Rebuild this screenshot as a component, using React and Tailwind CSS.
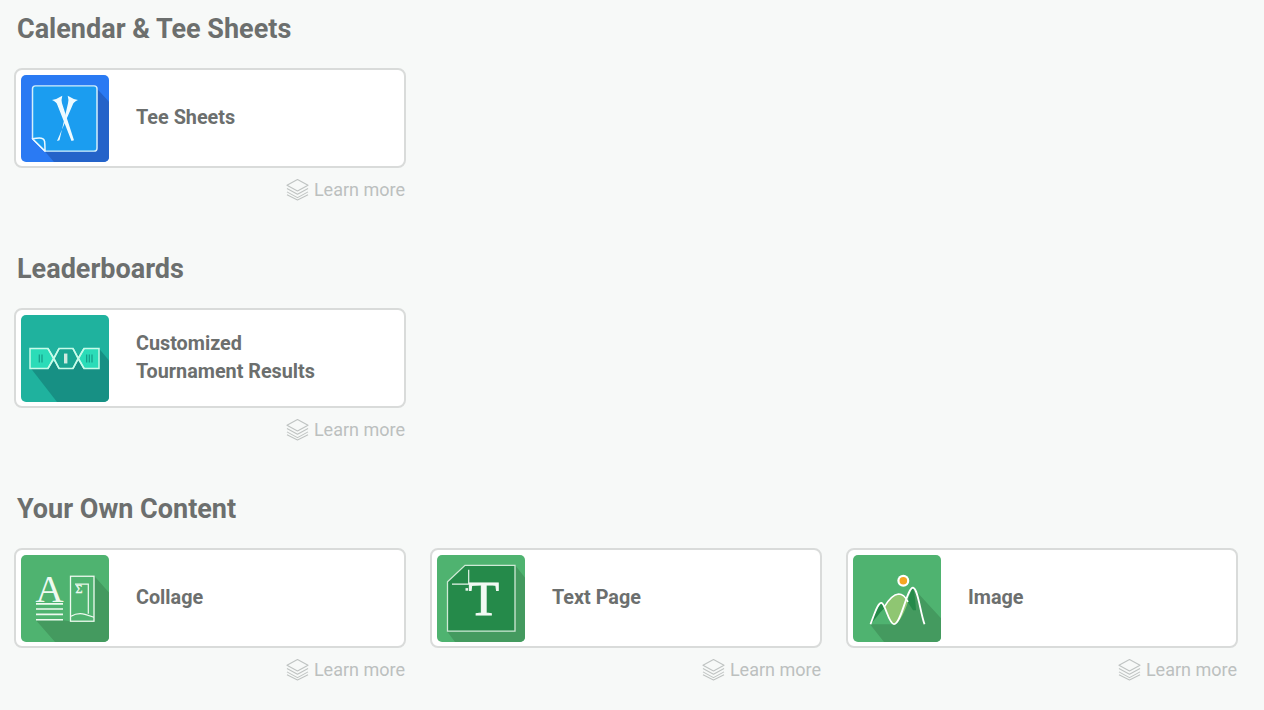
import React from 'react';

const iconClass = 'w-[88px] h-[87px] rounded-[5px] shrink-0';

const TeeIcon = () => (
  <svg viewBox="0 0 88 88" preserveAspectRatio="none" className={iconClass}>
    <rect width="88" height="88" fill="#2a7af3" />
    <polygon points="76,14 88,27 88,88 33,88 22,75" fill="#2463c9" />
    <path d="M11.5 14a3 3 0 0 1 3-3h58.500a3 3 0 0 1 3 3v60a3 3 0 0 1-3 3H24l-12.500-12.500z" fill="#1b9df0" stroke="#d3effb" strokeWidth="1.5" />
    <path d="M11.5 64.500c8-1.500 11.500-1 12 2.500.5 3 .5 6 .5 10z" fill="#1b9df0" stroke="#eaf8ff" strokeWidth="1.500" strokeLinejoin="round" />
    <path d="M31 25.300Q36 24.500 41.300 21 40 25.500 41 28.500L53 66 50.500 66.800 36.500 30.500Q35.500 27 31 25.300z" fill="#eefaff" />
    <path d="M57 25.300Q52 24.500 46.700 21 48 25.500 47 28.500L38.500 66 36 66.800 51.500 30.500Q52.500 27 57 25.300z" fill="#eefaff" />
  </svg>
);

const RibbonIcon = () => (
  <svg viewBox="0 0 88 88" preserveAspectRatio="none" className={iconClass}>
    <rect width="88" height="88" fill="#1fb29e" />
    <polygon points="78,34 88,46 88,88 36,88 10,54" fill="#179084" />
    <polygon points="9,34 27,34 33,44 27,54 9,54" fill="#2bdcb8" stroke="#c7fbe9" strokeWidth="1.500" />
    <polygon points="33,44 38,34 52,34 57,44 52,54 38,54" fill="#19a692" stroke="#c7fbe9" strokeWidth="1.500" />
    <polygon points="57,44 63,34 78,34 78,54 63,54" fill="#2bdcb8" stroke="#c7fbe9" strokeWidth="1.500" />
    <path d="M27 34L38 54M38 34L27 54M52 34L63 54M63 34L52 54" stroke="#c7fbe9" strokeWidth="1.500" />
    <rect x="43" y="39" width="3.400" height="10" fill="#cfe9df" />
    <path d="M18.300 40v8M21 40v8" stroke="#169a87" strokeWidth="1.200" />
    <path d="M65.700 40v8M68.300 40v8M71 40v8" stroke="#169a87" strokeWidth="1.200" />
  </svg>
);

const CollageIcon = () => (
  <svg viewBox="0 0 88 88" preserveAspectRatio="none" className={iconClass}>
    <rect width="88" height="88" fill="#4fb370" />
    <polygon points="73,21 88,38 88,88 34,88 15,66 42,66 49,67 73,67" fill="#449a5f" />
    <text x="28.700" y="47.500" textAnchor="middle" fontFamily="'Liberation Serif', serif" fontSize="39" fill="#eefaf0">A</text>
    <path d="M15 49.500h27M15 54.600h27M15 60h27M15 65.500h27" stroke="#eefaf0" strokeWidth="1.700" />
    <rect x="49.500" y="21.500" width="23.500" height="45.500" fill="none" stroke="#eefaf0" strokeWidth="1.300" />
    <path d="M54 29.500h13.300v30" fill="none" stroke="#eefaf0" strokeWidth="1.200" />
    <path d="M50 62c5-3 10-3 14-2 3 1 6 2 9 3" fill="none" stroke="#eefaf0" strokeWidth="1.200" />
    <text x="58" y="38.500" textAnchor="middle" fontFamily="'Liberation Serif', serif" fontSize="12" fill="#eefaf0" stroke="#eefaf0" strokeWidth="0.300">Σ</text>
  </svg>
);

const TextIcon = () => (
  <svg viewBox="0 0 88 88" preserveAspectRatio="none" className={iconClass}>
    <rect width="88" height="88" fill="#4fb370" />
    <polygon points="78,10 88,23 88,88 18,88 10,77 78,77" fill="#449a5f" />
    <polygon points="28,10.500 78,10.500 78,77 10.500,77 10.500,27" fill="#258a4a" stroke="#cfe9d6" strokeWidth="1.300" />
    <path d="M15 29.500h17M31.700 15v14.500" stroke="#e8f5ec" strokeWidth="1.200" fill="none" />
    <rect x="28.500" y="33.500" width="2.600" height="2.600" fill="#e8f5ec" />
    <text x="46.700" y="61" textAnchor="middle" fontFamily="'Liberation Serif', serif" fontSize="50" fill="#f2faf4" stroke="#f2faf4" strokeWidth="1">T</text>
  </svg>
);

const ImageIcon = () => (
  <svg viewBox="0 0 88 88" preserveAspectRatio="none" className={iconClass}>
    <rect width="88" height="88" fill="#4fb370" />
    <polygon points="60,33 88,64 88,88 31,88 17,70 41,70" fill="#449a5f" />
    <path d="M31 53c4-7 9-13 14.700-13.500 4.300 0 7.300 4 9.300 8-3 9-8 21-13 22-5 1-7-10-11-16.500z" fill="#8fc672" />
    <path d="M17.500 70c4-10 8-20 11-21 1 1 2 3 2.500 5-5 5-9 11-13.500 16z" fill="#258a4a" />
    <path d="M60 33c-2 2-3.500 8-5 15l5 8 3 0c-.5-8-1-16-3-23z" fill="#258a4a" />
    <path d="M17.500 70C22 58 25 48 28.500 48.500c4 1 7 21 12.500 21.500 7 .5 13-37 19-37 5 1 7 24 11.500 37" fill="none" stroke="#ffffff" strokeWidth="1.800" />
    <path d="M31 53c4-7 9-13 14.700-13.500 4.300 0 7.300 4 9.300 8" fill="none" stroke="#ffffff" strokeWidth="1.600" />
    <circle cx="50.300" cy="26" r="6" fill="#ffffff" />
    <circle cx="50.300" cy="26" r="3.800" fill="#f5a623" />
  </svg>
);

const LayersIcon = () => (
  <svg viewBox="0 0 24 24" className="w-[23px] h-[23px] shrink-0" fill="none" stroke="#bfc3c2" strokeWidth="1.100" strokeLinejoin="round">
    <polygon points="12,1.500 23,7.500 12,13.500 1,7.500" />
    <path d="M1 11l11 6 11-6" />
    <path d="M1 14.500l11 6 11-6" />
    <path d="M1 17.500l11 5.500 11-5.500" />
  </svg>
);

const Card = ({ icon, lines }) => (
  <div className="w-[392px]">
    <div className="h-[100px] bg-white border-2 border-[#d9dbda] rounded-lg flex items-center pl-[5px]">
      {icon}
      <div className="ml-[27px] pb-px text-[19.8px] leading-7 font-bold text-[#6c6f6e]">
        {lines.map((line) => (
          <div key={line}>{line}</div>
        ))}
      </div>
    </div>
    <div className="mt-[9px] h-6 flex items-center justify-end gap-[5px] pr-px text-[18px] text-[#bcc0bf]">
      <LayersIcon />
      <span>Learn more</span>
    </div>
  </div>
);

const Section = ({ title, children }) => (
  <div>
    <h2 className="h-9 mb-[21px] pl-[3px] text-[27px] leading-9 font-bold text-[#6c6f6e]">{title}</h2>
    <div className="flex gap-6">{children}</div>
  </div>
);

export default function App() {
  return (
    <div className="h-[710px] overflow-hidden bg-[#f7f9f8] pt-[11px] px-[14px] flex flex-col gap-[50px] font-['Roboto',sans-serif]">
      <Section title="Calendar & Tee Sheets">
        <Card icon={<TeeIcon />} lines={['Tee Sheets']} />
      </Section>
      <Section title="Leaderboards">
        <Card icon={<RibbonIcon />} lines={['Customized', 'Tournament Results']} />
      </Section>
      <Section title="Your Own Content">
        <Card icon={<CollageIcon />} lines={['Collage']} />
        <Card icon={<TextIcon />} lines={['Text Page']} />
        <Card icon={<ImageIcon />} lines={['Image']} />
      </Section>
    </div>
  );
}
